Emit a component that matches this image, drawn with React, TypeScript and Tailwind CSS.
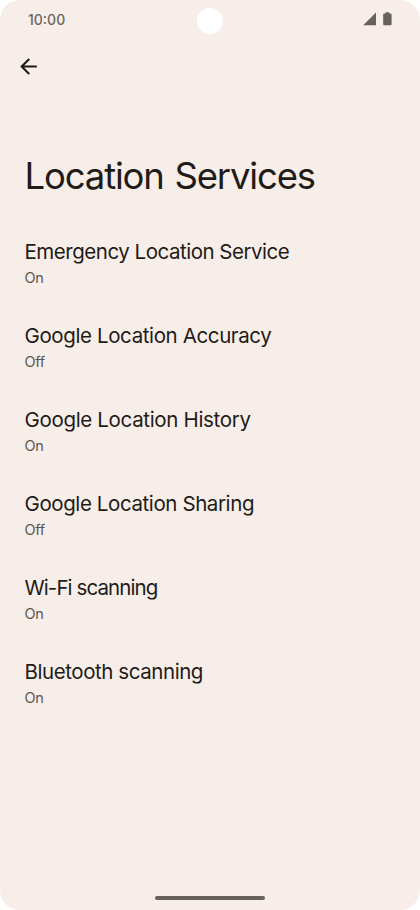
interface SettingItem {
  title: string;
  status: "On" | "Off";
  tracking: string;
}

const ITEMS: SettingItem[] = [
  { title: "Emergency Location Service", status: "On", tracking: "tracking-[-0.48px]" },
  { title: "Google Location Accuracy", status: "Off", tracking: "tracking-[-0.38px]" },
  { title: "Google Location History", status: "On", tracking: "tracking-[-0.33px]" },
  { title: "Google Location Sharing", status: "Off", tracking: "tracking-[-0.4px]" },
  { title: "Wi-Fi scanning", status: "On", tracking: "tracking-[-0.9px]" },
  { title: "Bluetooth scanning", status: "On", tracking: "tracking-[-0.43px]" },
];

function StatusBar() {
  return (
    <div className="relative flex h-10 items-start justify-between pl-7 pr-[28px]">
      <span className="mt-[9px] text-[14px] leading-[21px] font-medium text-[#6b6560]">10:00</span>

      {/* Camera cutout */}
      <div className="absolute top-[8px] left-[196.5px] size-[26px] rounded-full bg-white" />

      <div className="mt-[12px] flex items-center gap-[7px] text-[#66615d]">
        <svg width="13" height="14" viewBox="0 0 13 14" fill="currentColor">
          <path d="M13 0.5V13.3H0.2z" />
        </svg>
        <svg width="9" height="14" viewBox="0 0 9 14" fill="currentColor">
          <path d="M2.6 0.3h3.6v1.2h1.3c.6 0 1.1.5 1.1 1.1v9.6c0 .6-.5 1.1-1.1 1.1H1.3c-.6 0-1.1-.5-1.1-1.1V2.6c0-.6.5-1.1 1.1-1.1h1.3z" />
        </svg>
      </div>
    </div>
  );
}

export default function App() {
  return (
    <div className="h-[910px] w-[420px] bg-white font-['Inter',sans-serif]">
      <div className="flex h-full flex-col overflow-hidden rounded-[20px] bg-[#f7eeea]">
        <StatusBar />

        <button aria-label="Back" className="mt-[14px] ml-[16px] size-[25px] text-[#1f1b17]">
          <svg width="25" height="25" viewBox="0 0 24 24" fill="currentColor">
            <path d="M20 11H7.83l5.59-5.59L12 4l-8 8 8 8 1.41-1.41L7.83 13H20v-2z" />
          </svg>
        </button>

        <h1 className="mt-[73px] ml-[24.5px] text-[36.5px] leading-[48px] tracking-[-1.15px] whitespace-nowrap text-[#1f1b17] [word-spacing:1.5px]">
          Location Services
        </h1>

        <ul className="mt-[37px] ml-[24.5px]">
          {ITEMS.map((item) => (
            <li key={item.title} className="h-[84px] whitespace-nowrap">
              <div className={`text-[20.5px] leading-[30px] text-[#1f1b17] ${item.tracking}`}>
                {item.title}
              </div>
              <div className="mt-px text-[14.5px] leading-5 tracking-[-0.3px] text-[#5c5550]">
                {item.status}
              </div>
            </li>
          ))}
        </ul>

        {/* Gesture bar */}
        <div className="mx-auto mt-auto mb-[10px] h-1 w-[110px] rounded-full bg-[#66615e]" />
      </div>
    </div>
  );
}
